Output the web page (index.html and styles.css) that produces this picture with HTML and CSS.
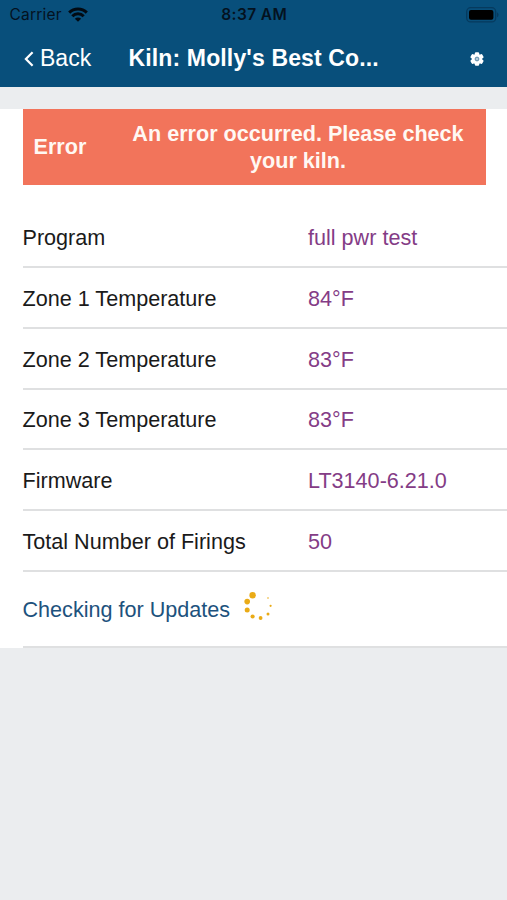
FILE: index.html
```html
<!DOCTYPE html>
<html lang="en">
<head>
    <meta charset="UTF-8" />
    <meta name="viewport" content="width=device-width, initial-scale=1.0"/>
    <title>Kiln: Molly's Best Cone</title>
    <link rel="stylesheet" href="styles.css">
</head>
<body>
    <header class="header">
        <div class="status-bar">
            <div class="carrier">
                <span class="carrier-name">Carrier</span>
                <svg class="wifi" width="20" height="15" viewBox="0 0 20 15" fill="none" stroke="#020a12" stroke-width="3">
                    <path d="M1.2 5.6a12.5 12.5 0 0 1 17.6 0"/>
                    <path d="M4.3 9.2a8.1 8.1 0 0 1 11.4 0"/>
                    <path d="M10 14.8 6.9 11.7a4.4 4.4 0 0 1 6.2 0z" fill="#020a12" stroke="none"/>
                </svg>
            </div>
            <span class="time">8:37 AM</span>
            <svg class="battery" width="33" height="16" viewBox="0 0 33 16">
                <rect x="0.7" y="0.7" width="29" height="14.2" rx="4" fill="none" stroke="#063a5e" stroke-width="1.3"/>
                <rect x="3" y="3" width="24.4" height="9.8" rx="2" fill="#000"/>
                <path d="M31 5.3q1.6 1 1.6 2.5T31 10.3z" fill="#063a5e"/>
            </svg>
        </div>
        <nav class="nav-bar">
            <a class="back">
                <svg width="10" height="16" viewBox="0 0 10 16" fill="none" stroke="#fff" stroke-width="2.2">
                    <path d="M8.6 1.2 1.9 8l6.7 6.8"/>
                </svg>
                <span>Back</span>
            </a>
            <h1 class="title">Kiln: Molly's Best Co...</h1>
            <svg class="gear" width="14" height="14" viewBox="-7 -7 14 14">
                <g fill="#fff">
                    <circle r="5.3"/>
                    <rect x="-2.2" y="-6.8" width="4.4" height="13.6" rx="1.2"/>
                    <rect x="-2.2" y="-6.8" width="4.4" height="13.6" rx="1.2" transform="rotate(60)"/>
                    <rect x="-2.2" y="-6.8" width="4.4" height="13.6" rx="1.2" transform="rotate(120)"/>
                </g>
                <circle r="1.9" fill="#b5c9d6" stroke="#5b8aa8" stroke-width="1"/>
            </svg>
        </nav>
    </header>

    <main class="content">
        <div class="alert">
            <strong class="alert-label">Error</strong>
            <strong class="alert-text">An error occurred. Please check your kiln.</strong>
        </div>
        <div class="list">
            <div class="row"><span class="label">Program</span><span class="value">full pwr test</span></div>
            <div class="row"><span class="label">Zone 1 Temperature</span><span class="value">84°F</span></div>
            <div class="row"><span class="label">Zone 2 Temperature</span><span class="value">83°F</span></div>
            <div class="row"><span class="label">Zone 3 Temperature</span><span class="value">83°F</span></div>
            <div class="row"><span class="label">Firmware</span><span class="value">LT3140-6.21.0</span></div>
            <div class="row"><span class="label">Total Number of Firings</span><span class="value">50</span></div>
            <div class="row updates">
                <span class="updates-text">Checking for Updates</span>
                <svg class="spinner" width="30" height="30" viewBox="0 0 30 30" fill="#eaab16">
                    <circle cx="9.6" cy="4.3" r="3.2"/>
                    <circle cx="4.2" cy="10.6" r="2.8"/>
                    <circle cx="4.2" cy="19.1" r="2.5"/>
                    <circle cx="9.6" cy="25.5" r="2.1"/>
                    <circle cx="17.6" cy="27" r="1.9"/>
                    <circle cx="25" cy="23" r="1.5"/>
                    <circle cx="27.6" cy="14.8" r="1.1"/>
                    <circle cx="25" cy="7" r="0.8"/>
                </svg>
            </div>
        </div>
    </main>
</body>
</html>
```
FILE: styles.css
```css
body {
    font-family: "Liberation Sans", Arial, sans-serif;
    font-size: 21.6px;
    background: #ebedef;
    color: #1a1a1a;
    margin: 0;
}
.header {
    background: #084f7b;
    color: #fff;
    height: 87px;
}
.status-bar {
    display: grid;
    grid-template-columns: 1fr auto 1fr;
    align-items: center;
    height: 29px;
    padding: 0 8px 0 9.5px;
    color: #04121f;
    font-family: Inter, "Liberation Sans", sans-serif;
    font-size: 15.5px;
}
.carrier {
    display: flex;
    align-items: center;
    gap: 6px;
}
.carrier-name {
    letter-spacing: 0.2px;
}
.time {
    font-weight: 600;
    font-size: 15.5px;
    letter-spacing: 0.4px;
}
.battery {
    justify-self: end;
}
.nav-bar {
    display: grid;
    grid-template-columns: 104.5px 1fr 14px;
    align-items: center;
    height: 59px;
    padding: 0 23px 0 24px;
}
.back {
    display: flex;
    align-items: center;
    gap: 6px;
    font-size: 23px;
}
.title {
    margin: 0;
    font-size: 23px;
    letter-spacing: 0.14px;
    white-space: nowrap;
}
.content {
    margin-top: 22px;
    background: #fff;
    padding-left: 22.5px;
}
.alert {
    display: flex;
    align-items: center;
    box-sizing: border-box;
    height: 75.5px;
    width: 463px;
    padding: 0 11px;
    background: #f2745b;
    color: #fff8f3;
    line-height: 27px;
}
.alert-label {
    width: 88px;
}
.alert-text {
    flex: 1;
    text-align: center;
}
.list {
    padding-top: 22.7px;
}
.row {
    display: flex;
    align-items: center;
    box-sizing: border-box;
    height: 60.8px;
    padding-top: 3px;
    border-bottom: 2px solid #dfe0e1;
}
.label {
    width: 285.5px;
}
.value {
    color: #843c86;
}
.updates {
    height: 76px;
    gap: 13px;
    color: #1d527d;
}
.spinner {
    margin-top: -8px;
}
```
